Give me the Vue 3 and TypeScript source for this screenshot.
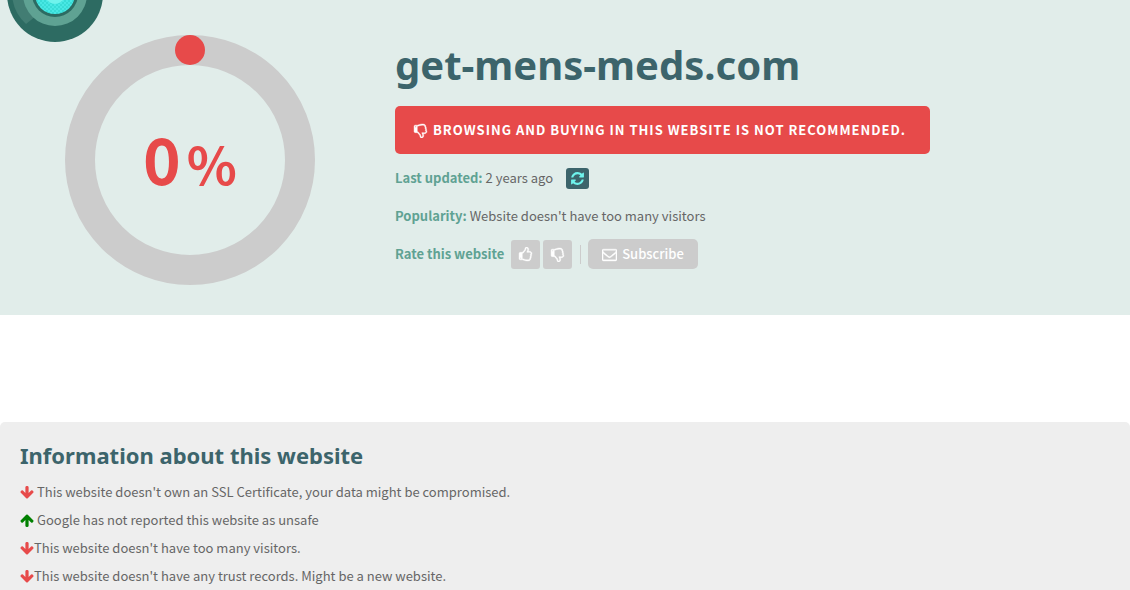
<script setup lang="ts">
interface Finding {
  good: boolean
  spaced: boolean
  text: string
}

const site = 'get-mens-meds.com'
const score = 0

const findings: Finding[] = [
  { good: false, spaced: true, text: "This website doesn't own an SSL Certificate, your data might be compromised." },
  { good: true, spaced: true, text: 'Google has not reported this website as unsafe' },
  { good: false, spaced: false, text: "This website doesn't have too many visitors." },
  { good: false, spaced: false, text: "This website doesn't have any trust records. Might be a new website." },
]

const thumb =
  'M384 1344q0-26-19-45t-45-19-45 19-19 45 19 45 45 19 45-19 19-45zm1152-576q0-51-39-89.5t-89-38.5h-352q0-58 48-159.5t48-160.5q0-98-32-145t-128-47q-26 26-38 85t-30.5 125.5-59.5 109.5q-22 23-77 91-4 5-23 30t-31.5 41-34.5 42.5-40 44-38.5 35.5-40 27-35.5 9h-32v640h32q13 0 31.5 3t33 6.5 38 11 35 11.5 35.5 12.5 29 10.5q211 73 342 73h121q192 0 192-167 0-26-5-56 30-16 47.5-52.5t17.5-73.5-18-69q53-50 53-119 0-25-10-55.5t-25-47.5q32-1 53.5-47t21.5-81zm128-1q0 89-49 163 9 33 9 69 0 77-38 144 3 21 3 43 0 101-60 178 1 139-85 219.5t-227 80.5h-129q-96 0-189.5-22.5t-216.5-65.5q-116-40-138-40h-288q-53 0-90.5-37.5t-37.5-90.5v-640q0-53 37.5-90.5t90.5-37.5h274q36-24 137-155 58-75 107-128 24-25 35.5-85.5t30.5-126.5 62-108q39-37 90-37 84 0 151 32.5t102 101.5 35 186q0 93-48 192h176q104 0 180 76t76 179z'
const refresh =
  'M1639 1056q0 5-1 7-64 268-268 434.5t-478 166.5q-146 0-282.5-55t-243.5-157l-129 129q-19 19-45 19t-45-19-19-45v-448q0-26 19-45t45-19h448q26 0 45 19t19 45-19 45l-137 137q71 66 161 102t187 36q134 0 250-65t186-179q11-17 53-117 8-23 30-23h192q13 0 22.5 9.5t9.5 22.5zm25-800v448q0 26-19 45t-45 19h-448q-26 0-45-19t-19-45 19-45l138-138q-148-137-349-137-134 0-250 65t-186 179q-11 17-53 117-8 23-30 23h-199q-13 0-22.5-9.5t-9.5-22.5v-7q65-268 270-434.5t480-166.5q146 0 284 55.5t245 156.5l130-129q19-19 45-19t45 19 19 45z'
const envelope =
  'M1664 1504v-768q-32 36-69 66-268 206-426 338-51 43-83 67t-86.5 48.5-102.5 24.5h-2q-48 0-102.5-24.5t-86.5-48.5-83-67q-158-132-426-338-37-30-69-66v768q0 13 9.5 22.5t22.5 9.5h1472q13 0 22.5-9.5t9.5-22.5zm0-1051v-24.5l-.5-13-3-12.5-5.5-9-9-7.5-14-2.5h-1472q-13 0-22.5 9.5t-9.5 22.5q0 168 147 284 193 152 401 317 6 5 35 29.5t46 37.5 44.5 31.5 50.5 27.5 43 9h2q20 0 43-9t50.5-27.5 44.5-31.5 46-37.5 35-29.5q208-165 401-317 54-43 100.5-115.5t46.5-131.5zm128-37v1088q0 66-47 113t-113 47h-1472q-66 0-113-47t-47-113v-1088q0-66 47-113t113-47h1472q66 0 113 47t47 113z'
const arrow =
  'M1675 832q0 53-37 90l-651 652q-39 37-91 37-53 0-90-37l-651-652q-38-36-38-90 0-53 38-91l74-75q39-37 91-37 53 0 90 37l294 294v-704q0-52 38-90t90-38h128q52 0 90 38t38 90v704l294-294q37-37 90-37 52 0 91 37l75 75q37 39 37 91z'
</script>

<template>
  <div class="page">
    <header class="hero">
      <svg class="logo" width="96" height="42" viewBox="7 0 96 42" aria-hidden="true">
        <defs>
          <pattern id="weave" width="4" height="4" patternUnits="userSpaceOnUse">
            <rect width="4" height="4" fill="#48e8e4" />
            <rect width="2" height="2" fill="#38dcd6" />
            <rect x="2" y="2" width="2" height="2" fill="#38dcd6" />
          </pattern>
        </defs>
        <circle cx="55" cy="-6" r="48" fill="#2d6b62" />
        <path d="M12 -6A43 43 0 0 0 26 24L36 16L28 -6Z" fill="#427d73" />
        <circle cx="55" cy="-6" r="32" fill="#5fa293" />
        <circle cx="55" cy="-6" r="23" fill="#2d6b62" />
        <circle cx="55" cy="-6" r="20" fill="url(#weave)" />
        <circle cx="55" cy="-6" r="10" fill="#6ff3ec" />
      </svg>

      <div class="gauge">
        <svg class="ring" viewBox="0 0 250 250" aria-hidden="true">
          <circle cx="125" cy="125" r="110" fill="none" stroke="#ccc" stroke-width="30" />
          <circle cx="125" cy="15" r="15" fill="#e74a4a" />
        </svg>
        <div class="score"><span>{{ score }}</span><span class="percent">%</span></div>
      </div>

      <div class="details">
        <h1>{{ site }}</h1>
        <div class="alert">
          <svg class="icon outline flip" viewBox="0 0 1792 1792" aria-hidden="true"><path :d="thumb" /></svg>
          <span>Browsing and buying in this website is not recommended.</span>
        </div>
        <div class="row">
          <strong>Last updated:</strong>
          <span>2 years ago</span>
          <button class="refresh" type="button" aria-label="Refresh">
            <svg class="icon" viewBox="0 0 1792 1792" aria-hidden="true"><path :d="refresh" /></svg>
          </button>
        </div>
        <div class="row">
          <strong>Popularity:</strong>
          <span>Website doesn't have too many visitors</span>
        </div>
        <div class="row">
          <strong>Rate this website</strong>
          <div class="actions">
            <button class="vote" type="button" aria-label="Thumbs up">
              <svg class="icon outline" viewBox="0 0 1792 1792" aria-hidden="true"><path :d="thumb" /></svg>
            </button>
            <button class="vote" type="button" aria-label="Thumbs down">
              <svg class="icon outline flip" viewBox="0 0 1792 1792" aria-hidden="true"><path :d="thumb" /></svg>
            </button>
            <span class="divider"></span>
            <button class="subscribe" type="button">
              <svg class="icon outline" viewBox="0 0 1792 1792" aria-hidden="true"><path :d="envelope" /></svg>
              <span>Subscribe</span>
            </button>
          </div>
        </div>
      </div>
    </header>

    <section class="info">
      <h2>Information about this website</h2>
      <ul>
        <li v-for="item in findings" :key="item.text" :class="{ spaced: item.spaced }">
          <svg class="icon" :class="item.good ? 'good flip' : 'bad'" viewBox="64 0 1664 1792" aria-hidden="true">
            <path :d="arrow" />
          </svg>
          <span>{{ item.text }}</span>
        </li>
      </ul>
    </section>
  </div>
</template>

<style>
body {
  margin: 0;
  background: #fff;
}
</style>

<style scoped>
.page {
  min-height: 100vh;
  display: flex;
  flex-direction: column;
  font-family: "Noto Sans CJK SC", "Noto Sans", sans-serif;
  font-size: 13px;
  line-height: 28px;
  color: #666;
}
.hero {
  position: relative;
  display: flex;
  align-items: flex-start;
  gap: 80px;
  padding: 35px 65px 30px;
  background: #e1edea;
}
.logo {
  position: absolute;
  top: 0;
  left: 7px;
}
.gauge {
  flex: none;
  display: grid;
  place-items: center;
  width: 250px;
  height: 250px;
}
.ring,
.score {
  grid-area: 1 / 1;
}
.score {
  display: flex;
  align-items: baseline;
  gap: 6px;
  color: #e74a4a;
  font-size: 64px;
  font-weight: 700;
  line-height: 64px;
}
.percent {
  font-size: 52px;
}
.details {
  flex: 1;
  display: flex;
  flex-direction: column;
  align-items: flex-start;
}
h1,
h2 {
  margin: 0;
  color: #3c646b;
  font-family: "Noto Sans", sans-serif;
  font-weight: 700;
}
h1 {
  font-size: 40px;
  line-height: 60px;
}
.alert {
  display: flex;
  align-items: center;
  gap: 5px;
  margin: 11px 0 5px;
  padding: 10px 24px 10px 18px;
  border-radius: 5px;
  background: #e74a4a;
  color: #fff;
  font-weight: 700;
  letter-spacing: 1px;
  text-transform: uppercase;
}
.row {
  display: flex;
  align-items: center;
  gap: 3px;
  height: 38px;
}
.row strong {
  color: #5fa293;
}
.icon {
  flex: none;
  width: 15px;
  height: 15px;
  fill: currentColor;
}
.outline {
  stroke: currentColor;
  stroke-width: 50;
}
.flip {
  transform: scaleY(-1);
}
.actions {
  display: flex;
  align-items: center;
  gap: 3px;
  margin-left: 4px;
}
button {
  display: flex;
  align-items: center;
  justify-content: center;
  border: 0;
  padding: 0;
  background: #ccc;
  color: #fff;
  font: inherit;
  cursor: pointer;
}
.refresh {
  width: 23px;
  height: 21px;
  margin-left: 10px;
  border-radius: 3px;
  background: #3c646b;
  color: #6ff3ec;
}
.vote {
  width: 29px;
  height: 29px;
  border-radius: 3px;
}
.divider {
  width: 1px;
  height: 19px;
  margin: 0 4px 0 5px;
  background: #ccc;
}
.subscribe {
  gap: 5px;
  height: 30px;
  padding: 0 14px;
  border-radius: 5px;
  font-weight: 500;
}
.info {
  flex: 1;
  margin-top: 107px;
  padding: 19px 20px 0;
  border-radius: 5px 5px 0 0;
  background: #eee;
}
h2 {
  margin-bottom: 9px;
  font-size: 22px;
  line-height: 28px;
}
ul {
  margin: 0;
  padding: 0;
  list-style: none;
}
li {
  display: flex;
  align-items: center;
}
li.spaced {
  gap: 3px;
}
li .icon {
  width: 14px;
}
.bad {
  color: #e74a4a;
}
.good {
  color: #008000;
}
</style>
